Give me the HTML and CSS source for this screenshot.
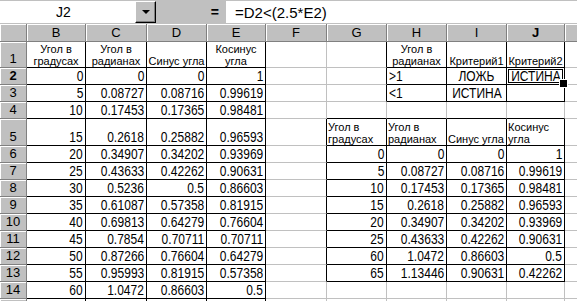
FILE: index.html
```html
<!DOCTYPE html>
<html lang="ru">
  <head>
    <meta charset="UTF-8" />
    <title>Microsoft Excel - Книга1</title>
    <link rel="stylesheet" href="styles.css">
  </head>
  <body>
    <div class="formula-bar">
      <div class="name-box">J2</div>
      <div class="drop-btn"><span class="arrow"></span></div>
      <div class="eq">=</div>
      <div class="formula">=D2&lt;(2.5*E2)</div>
    </div>
    <div class="sheet" id="sheet"></div>

    <script>
      const colNames = ["B", "C", "D", "E", "F", "G", "H", "I", "J", "K"];
      const rowCount = 15;

      // ranges with black borders: [firstCol, lastCol, firstRow, lastRow], B = 1
      const boxes = [
        [1, 4, 1, 16],
        [7, 9, 1, 3],
        [6, 9, 5, 13],
      ];

      const data = {};
      const put = (col, startRow, values, kind) => {
        values.forEach((v, i) => {
          data[col + (startRow + i)] = { text: String(v), kind };
        });
      };

      put("B", 1, ["Угол в градусах"], "head");
      put("C", 1, ["Угол в радианах"], "head");
      put("D", 1, ["Синус угла"], "head one");
      put("E", 1, ["Косинус угла"], "head");
      put("H", 1, ["Угол в радианах"], "head");
      put("I", 1, ["Критерий1"], "head one");
      put("J", 1, ["Критерий2"], "head one");
      put("H", 2, [">1", "<1"], "text");
      put("I", 2, ["ЛОЖЬ", "ИСТИНА"], "word");
      put("J", 2, ["ИСТИНА"], "word");

      put("B", 2, [0, 5, 10, 15, 20, 25, 30, 35, 40, 45, 50, 55, 60], "num");
      put("C", 2, [0, 0.08727, 0.17453, 0.2618, 0.34907, 0.43633, 0.5236, 0.61087, 0.69813, 0.7854, 0.87266, 0.95993, 1.0472], "num");
      put("D", 2, [0, 0.08716, 0.17365, 0.25882, 0.34202, 0.42262, 0.5, 0.57358, 0.64279, 0.70711, 0.76604, 0.81915, 0.86603], "num");
      put("E", 2, [1, 0.99619, 0.98481, 0.96593, 0.93969, 0.90631, 0.86603, 0.81915, 0.76604, 0.70711, 0.64279, 0.57358, 0.5], "num");

      put("G", 5, ["Угол в градусах"], "head-left");
      put("H", 5, ["Угол в радианах"], "head-left");
      put("I", 5, ["Синус угла"], "head-left one");
      put("J", 5, ["Косинус угла"], "head-left");
      put("G", 6, [0, 5, 10, 15, 20, 25, 60, 65], "num");
      put("H", 6, [0, 0.08727, 0.17453, 0.2618, 0.34907, 0.43633, 1.0472, 1.13446], "num");
      put("I", 6, [0, 0.08716, 0.17365, 0.25882, 0.34202, 0.42262, 0.86603, 0.90631], "num");
      put("J", 6, [1, 0.99619, 0.98481, 0.96593, 0.93969, 0.90631, 0.5, 0.42262], "num");

      // ----------------------------------------------------------------------------------------

      const sheet = document.getElementById("sheet");

      const inBox = (c, r) =>
        boxes.some(([c1, c2, r1, r2]) => c >= c1 && c <= c2 && r >= r1 && r <= r2);

      const add = (cls, text) => {
        const div = document.createElement("div");
        div.className = cls;
        if (text !== undefined) div.textContent = text;
        sheet.appendChild(div);
        return div;
      };

      add("corner");
      colNames.forEach((name) => {
        // column K only peeks in at the right edge, its letter is off screen
        const label = name === "K" ? "" : name;
        add(name === "J" ? "col-head current" : "col-head", label);
      });

      for (let r = 1; r <= rowCount; r++) {
        // last row is only a sliver at the bottom
        const label = r === rowCount ? "" : r;
        add(r === 2 ? "row-head current" : "row-head", label);
        colNames.forEach((name, i) => {
          const c = i + 1;
          const item = data[name + r];
          let cls = "cell";
          if (inBox(c, r) || inBox(c + 1, r)) cls += " edge-r";
          if (inBox(c, r) || inBox(c, r + 1)) cls += " edge-b";
          if (item) cls += " " + item.kind;
          if (name + r === "J2") cls += " active";
          const cell = add(cls);
          if (item) {
            const span = document.createElement("span");
            span.textContent = item.text;
            cell.appendChild(span);
          }
        });
      }
    </script>
  </body>
</html>
```

FILE: styles.css
```css
* {
  box-sizing: border-box;
  margin: 0;
  padding: 0;
}
body {
  background-color: #c0c0c0;
  font-family: "Liberation Sans", Arial, sans-serif;
  color: #000;
  width: 577px;
  height: 301px;
  overflow: hidden;
}

/* formula bar */
.formula-bar {
  display: flex;
  height: 23px;
  padding-top: 1px;
}
.name-box {
  width: 135px;
  background-color: #fff;
  display: flex;
  align-items: center;
  justify-content: center;
  padding-right: 8px;
  font-size: 14px;
}
.drop-btn {
  width: 21px;
  display: flex;
  align-items: center;
  justify-content: center;
  border: 1px solid;
  border-color: #fff #000 #000 #fff;
  box-shadow: inset -1px -1px 0 #808080;
}
.arrow {
  width: 0;
  height: 0;
  border-left: 4px solid transparent;
  border-right: 4px solid transparent;
  border-top: 4px solid #000;
}
.eq {
  width: 70px;
  display: flex;
  align-items: center;
  justify-content: flex-end;
  padding-right: 7px;
  font-size: 14px;
  font-weight: bold;
}
.formula {
  flex: 1;
  background-color: #fff;
  display: flex;
  align-items: center;
  padding-left: 9px;
  font-size: 15px;
}

/* sheet grid */
.sheet {
  display: grid;
  grid-template-columns: 27px 59px 61px 60px 59px 61px 60px 60px 60px 58px 60px;
  grid-template-rows: 18px 26px 17px 17px 17px 27px repeat(10, 17px);
  margin-top: 1px;
}
.corner,
.col-head,
.row-head {
  background-color: #c0c0c0;
  border-right: 1px solid #808080;
  border-bottom: 1px solid #808080;
  box-shadow: inset 1px 1px 0 #fff;
  display: flex;
  justify-content: center;
  font-size: 13px;
}
.col-head {
  align-items: center;
}
.row-head {
  align-items: flex-end;
  padding-bottom: 1px;
}
.current {
  font-weight: bold;
}

.cell {
  background-color: #fff;
  border-right: 1px solid #c0c0c0;
  border-bottom: 1px solid #c0c0c0;
  display: flex;
  align-items: flex-end;
  padding: 0 2px 1px 2px;
  font-size: 15px;
  line-height: 15px;
  overflow: hidden;
}
.edge-r {
  border-right-color: #000;
}
.edge-b {
  border-bottom-color: #000;
}
/* the sheet font is a narrow one: squeeze the glyphs */
.num span,
.word span,
.text span {
  display: inline-block;
  transform: scaleX(0.8);
  white-space: nowrap;
}
.num {
  justify-content: flex-end;
}
.num span {
  transform-origin: right bottom;
}
.word {
  justify-content: center;
}
.text span {
  transform-origin: left bottom;
}
.head,
.head-left {
  font-size: 11px;
  line-height: 12px;
  padding-bottom: 0;
}
.head {
  justify-content: center;
  text-align: center;
}
.head-left {
  text-align: left;
  padding-left: 1px;
}
.one {
  white-space: nowrap;
}
.active {
  position: relative;
  overflow: visible;
  box-shadow: inset 0 0 0 1px #fff, inset 0 0 0 2px #000;
}
.active::after {
  content: "";
  position: absolute;
  right: -4px;
  bottom: -4px;
  width: 7px;
  height: 7px;
  background-color: #000;
  border: 1px solid #fff;
  z-index: 1;
}
```
